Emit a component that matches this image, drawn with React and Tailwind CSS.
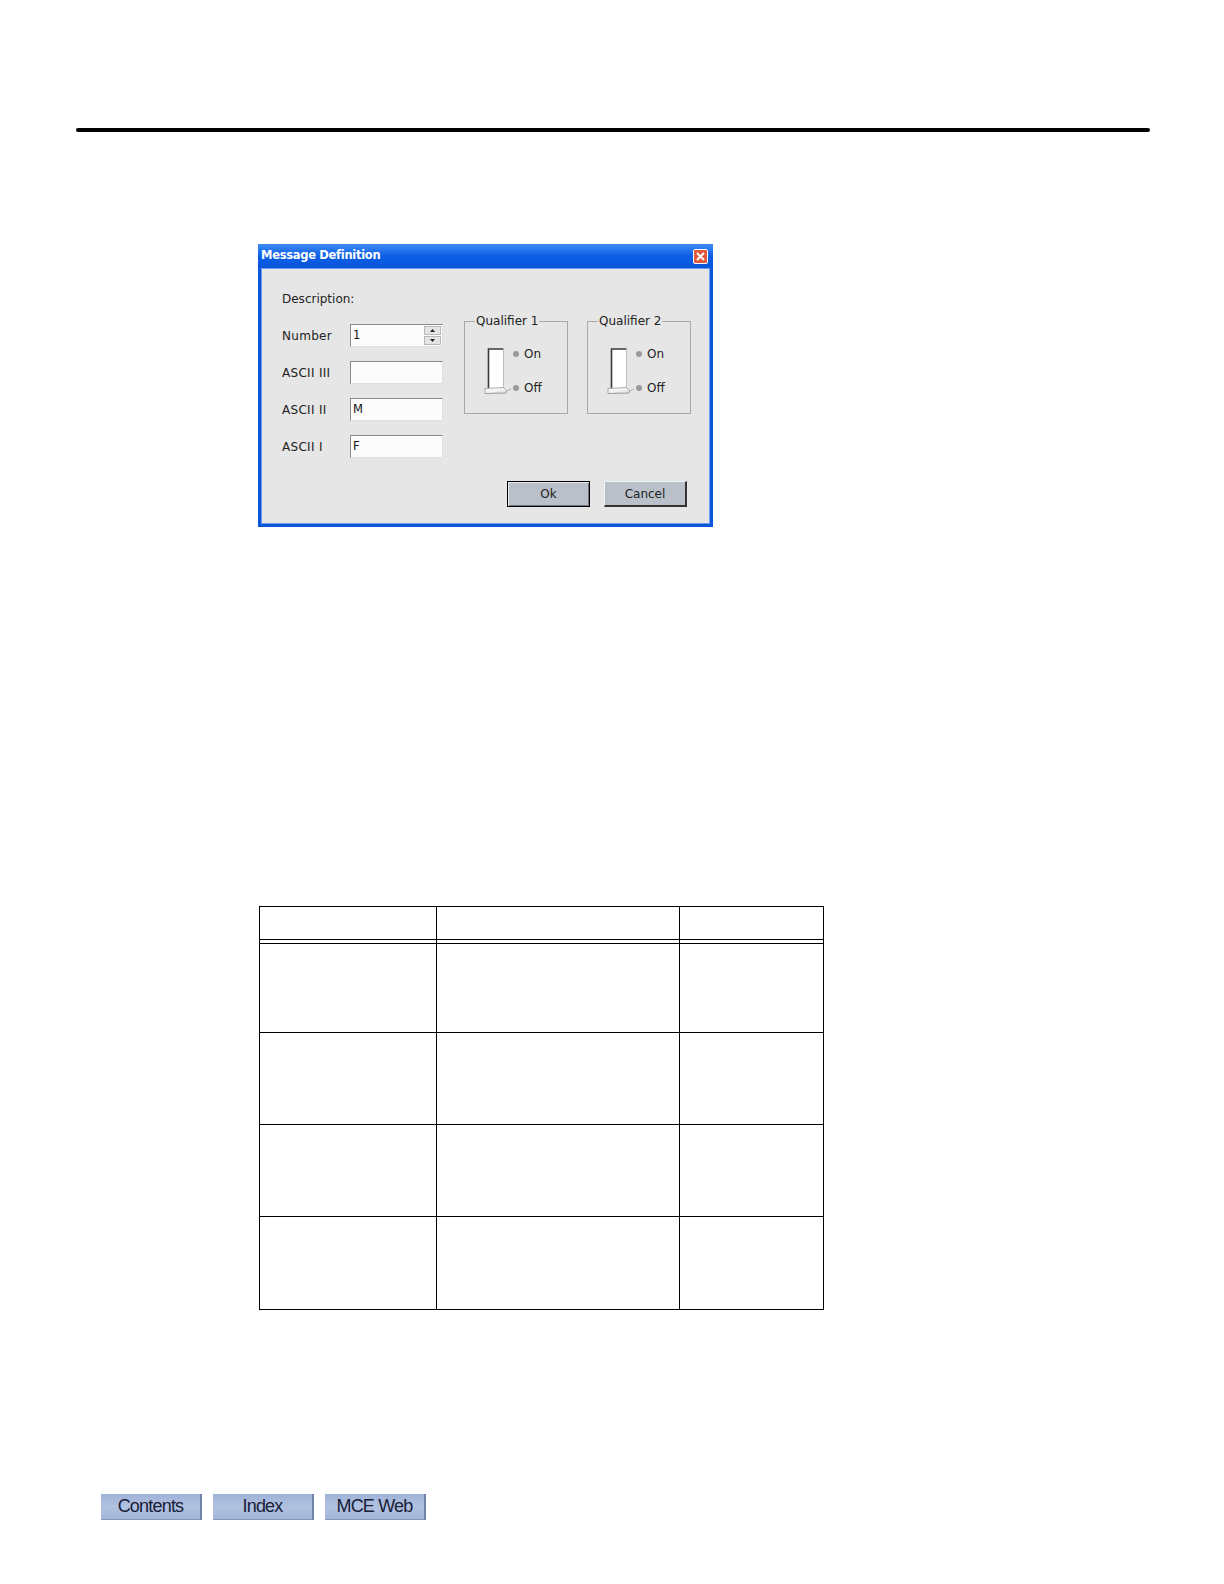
import React from 'react';

const ui = { fontFamily: '"DejaVu Sans", Verdana, sans-serif' };

const Field = ({ label, value, spin }) => (
  <div className="flex items-center h-[23px]">
    <span className="w-[68px] text-[12px] text-[#222] tracking-[0.3px]">{label}</span>
    <div className="relative w-[93px] h-[23px] bg-[#fcfcfc] border border-t-[#8a8a8a] border-l-[#8a8a8a] border-r-[#e0e0e0] border-b-[#e0e0e0] flex items-center pl-[2px] text-[11.5px] text-[#111]">
      {value}
      {spin && (
        <div className="absolute right-[1px] top-[1px] bottom-[1px] w-[17px] flex flex-col gap-[1px]">
          <div className="flex-1 bg-[#e4e4e4] border border-[#b8b8b8] flex items-center justify-center">
            <svg width="5" height="3" viewBox="0 0 5 3"><path d="M0 3 L2.5 0 L5 3 Z" fill="#222" /></svg>
          </div>
          <div className="flex-1 bg-[#e4e4e4] border border-[#b8b8b8] flex items-center justify-center">
            <svg width="5" height="3" viewBox="0 0 5 3"><path d="M0 0 L2.5 3 L5 0 Z" fill="#222" /></svg>
          </div>
        </div>
      )}
    </div>
  </div>
);

const Toggle = () => (
  <svg width="28" height="48" viewBox="0 0 28 48" className="shrink-0">
    <rect x="4.5" y="1" width="15" height="39" fill="#ffffff" />
    <path d="M4.5 40 L4.5 1 L19.5 1" fill="none" stroke="#3a3a3a" strokeWidth="1.6" />
    <path d="M19.5 1 L19.5 40" fill="none" stroke="#bdbdbd" strokeWidth="1" />
    <path d="M1 45.5 L1 40.5 L19.5 39.5 L22.5 43 L27 41" fill="#f4f4f4" stroke="#9a9a9a" strokeWidth="0.8" />
    <path d="M1 45.5 L22 45 L22.5 43" fill="none" stroke="#8a8a8a" strokeWidth="0.8" />
  </svg>
);

const Qualifier = ({ title }) => (
  <fieldset className="w-[104px] h-[100px] border border-[#a9a9a9] -mt-[9px]">
    <legend className="ml-[10px] px-[1px] text-[12px] leading-[14px] text-[#222]">{title}</legend>
    <div className="flex ml-[19px] mt-[20px]">
      <Toggle />
      <div className="flex flex-col justify-between ml-[1px] h-[52px] -mt-[3px] text-[12px] text-[#222]">
        <div className="flex items-center gap-[5px]">
          <span className="w-[6px] h-[6px] rounded-full bg-[#9a9a9a]" />
          <span>On</span>
        </div>
        <div className="flex items-center gap-[5px]">
          <span className="w-[6px] h-[6px] rounded-full bg-[#9a9a9a]" />
          <span>Off</span>
        </div>
      </div>
    </div>
  </fieldset>
);

const NavButton = ({ children }) => (
  <div
    className="w-[101px] h-[26px] flex items-center justify-center bg-gradient-to-b from-[#9fb2d8] via-[#b1c1e0] to-[#a3b6da] border-r-2 border-r-[#6f82a8] border-b border-b-[#8295bb] text-[18px] tracking-[-0.8px] text-[#172038]"
    style={{ fontFamily: '"Liberation Sans Narrow", "Liberation Sans", Arial, sans-serif' }}
  >
    {children}
  </div>
);

export default function App() {
  const rows = [89, 92, 92, 92];
  return (
    <div className="w-full bg-white pb-[40px]" style={ui}>
      <div className="pt-[128px] pl-[76px]">
        <div className="w-[1074px] h-[4px] bg-black rounded-full" />
      </div>

      <div className="ml-[258px] mt-[112px] w-[455px] h-[283px] flex flex-col bg-[#0a57dc] rounded-t-[2px]">
        <div className="h-[24px] flex items-center justify-between pl-[3px] pr-[5px] bg-gradient-to-b from-[#3d8af5] via-[#0b5fe6] to-[#0956dc]">
          <span className="text-white font-bold text-[11.5px] tracking-[-0.3px]">Message Definition</span>
          <div className="w-[15px] h-[15px] rounded-[2px] bg-[#e2583a] border border-white flex items-center justify-center">
            <svg width="9" height="9" viewBox="0 0 9 9"><path d="M1 1 L8 8 M8 1 L1 8" stroke="#fff" strokeWidth="2" /></svg>
          </div>
        </div>
        <div className="flex-1 mx-[3px] mb-[3px] bg-[#e6e6e6] border border-[#6f9cf0] px-[20px] pt-[23px] flex flex-col">
          <div className="text-[12px] text-[#222] leading-[14px]">Description:</div>
          <div className="flex mt-[17px]">
            <div className="flex flex-col gap-[14px] mt-[1px]">
              <Field label="Number" value="1" spin />
              <Field label="ASCII III" value="" />
              <Field label="ASCII II" value="M" />
              <Field label="ASCII I" value="F" />
            </div>
            <div className="flex gap-[19px] ml-[21px]">
              <Qualifier title="Qualifier 1" />
              <Qualifier title="Qualifier 2" />
            </div>
          </div>
          <div className="flex justify-end gap-[14px] mt-[23px] pr-[2px]">
            <div className="w-[83px] h-[26px] bg-[#b9c0ca] border border-black shadow-[inset_1px_1px_0_#e8ecf2,inset_-1px_-1px_0_#707680] flex items-center justify-center text-[12px] text-[#222]">Ok</div>
            <div className="w-[83px] h-[26px] bg-[#b9c0ca] border-t border-l border-t-[#eef1f5] border-l-[#eef1f5] border-r-2 border-b-2 border-r-[#333] border-b-[#333] flex items-center justify-center text-[12px] text-[#222]">Cancel</div>
          </div>
        </div>
      </div>

      <div className="ml-[259px] mt-[379px] w-[565px] border-[1.5px] border-black">
        <div className="grid grid-cols-[177px_243px_1fr] h-[33px] border-b-[1.5px] border-black">
          <div className="border-r-[1.5px] border-black" />
          <div className="border-r-[1.5px] border-black" />
          <div />
        </div>
        <div className="h-[4px] grid grid-cols-[177px_243px_1fr] border-b-[1.5px] border-black">
          <div className="border-r-[1.5px] border-black" />
          <div className="border-r-[1.5px] border-black" />
          <div />
        </div>
        {rows.map((h, i) => (
          <div
            key={i}
            className={`grid grid-cols-[177px_243px_1fr] ${i < rows.length - 1 ? 'border-b-[1.5px] border-black' : ''}`}
            style={{ height: h }}
          >
            <div className="border-r-[1.5px] border-black" />
            <div className="border-r-[1.5px] border-black" />
            <div />
          </div>
        ))}
      </div>

      <div className="ml-[101px] mt-[184px] flex gap-[11px]">
        <NavButton>Contents</NavButton>
        <NavButton>Index</NavButton>
        <NavButton>MCE Web</NavButton>
      </div>
    </div>
  );
}
